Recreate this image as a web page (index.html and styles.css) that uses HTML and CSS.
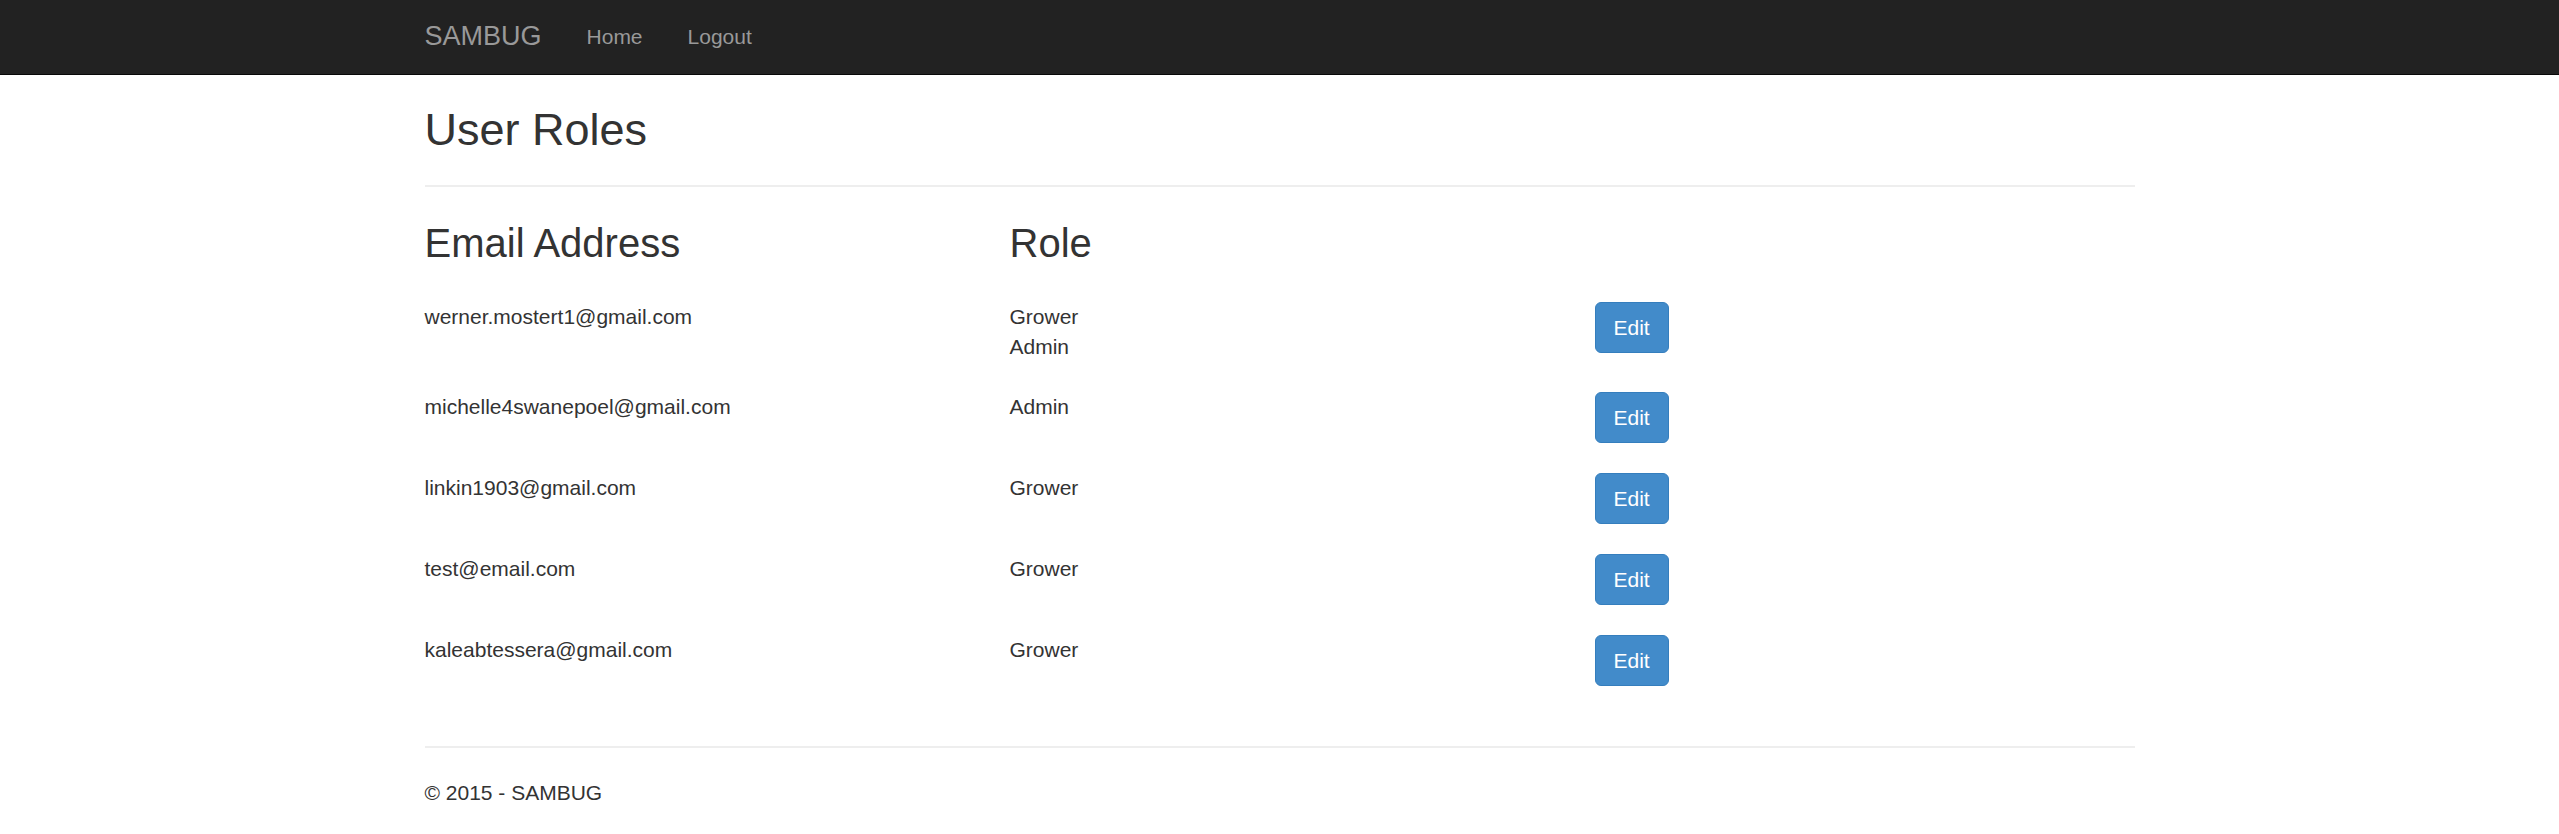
FILE: index.html
```html
<!DOCTYPE html>
<html lang="en">
<head>
<meta charset="utf-8">
<title>User Roles - SAMBUG</title>
<link rel="stylesheet" href="styles.css">
</head>
<body>
<nav class="navbar">
  <div class="navbar-inner">
    <a class="brand" href="#">SAMBUG</a>
    <a class="nav-link" href="#">Home</a>
    <a class="nav-link" href="#">Logout</a>
  </div>
</nav>
<main class="container">
  <h2 class="page-title">User Roles</h2>
  <hr class="rule">
  <div class="grid header-row">
    <h3 class="col-title">Email Address</h3>
    <h3 class="col-title">Role</h3>
    <div></div>
  </div>
  <div class="rows">
    <div class="grid user-row">
      <div>werner.mostert1@gmail.com</div>
      <div>Grower<br>Admin</div>
      <div><button class="btn">Edit</button></div>
    </div>
    <div class="grid user-row">
      <div>michelle4swanepoel@gmail.com</div>
      <div>Admin</div>
      <div><button class="btn">Edit</button></div>
    </div>
    <div class="grid user-row">
      <div>linkin1903@gmail.com</div>
      <div>Grower</div>
      <div><button class="btn">Edit</button></div>
    </div>
    <div class="grid user-row">
      <div>test@email.com</div>
      <div>Grower</div>
      <div><button class="btn">Edit</button></div>
    </div>
    <div class="grid user-row">
      <div>kaleabtessera@gmail.com</div>
      <div>Grower</div>
      <div><button class="btn">Edit</button></div>
    </div>
  </div>
  <hr class="rule footer-rule">
  <footer class="footer">
    <p>&copy; 2015 - SAMBUG</p>
  </footer>
</main>
</body>
</html>
```
FILE: styles.css
```css
html, body {
  margin: 0;
  padding: 0;
  background: #ffffff;
}

body {
  font-family: "Liberation Sans", Arial, Helvetica, sans-serif;
  font-size: 21px;
  line-height: 30px;
  color: #333333;
}

.navbar {
  height: 74px;
  background: #222222;
  border-bottom: 1px solid #080808;
}

.navbar-inner {
  width: 1710px;
  margin: 0 auto;
  display: flex;
  align-items: flex-start;
  height: 74px;
}

.brand {
  font-size: 27px;
  line-height: 30px;
  padding: 21px 22.5px 0 0;
  color: #999999;
  text-decoration: none;
}

.nav-link {
  font-size: 21px;
  line-height: 30px;
  padding: 22px 22.5px 0;
  color: #999999;
  text-decoration: none;
}

.container {
  width: 1710px;
  margin: 0 auto;
}

.page-title {
  font-size: 45px;
  font-weight: 500;
  line-height: 49.5px;
  margin: 30px 0 15px;
  color: #333333;
}

.rule {
  border: 0;
  border-top: 2px solid #eeeeee;
  margin: 30px 0;
  height: 0;
}

.grid {
  display: grid;
  grid-template-columns: 585px 585px 1fr;
}

.header-row {
  margin-top: -26px;
  margin-bottom: 37.5px;
  padding-top: 30px;
}

.col-title {
  font-size: 40px;
  font-weight: 500;
  line-height: 44px;
  margin: 0;
  color: #333333;
}

.rows {
  display: flex;
  flex-direction: column;
}

.user-row {
  margin-bottom: 30px;
}

.btn {
  font-family: "Liberation Sans", Arial, Helvetica, sans-serif;
  font-size: 21px;
  line-height: 30px;
  color: #ffffff;
  background: #428bca;
  border: 1px solid #357ebd;
  border-radius: 6px;
  padding: 9.5px 18px;
  margin: 0;
  cursor: pointer;
  display: block;
}

.footer-rule {
  margin-top: 30px;
  margin-bottom: 30px;
}

.footer p {
  margin: 0 0 15px;
}
```
